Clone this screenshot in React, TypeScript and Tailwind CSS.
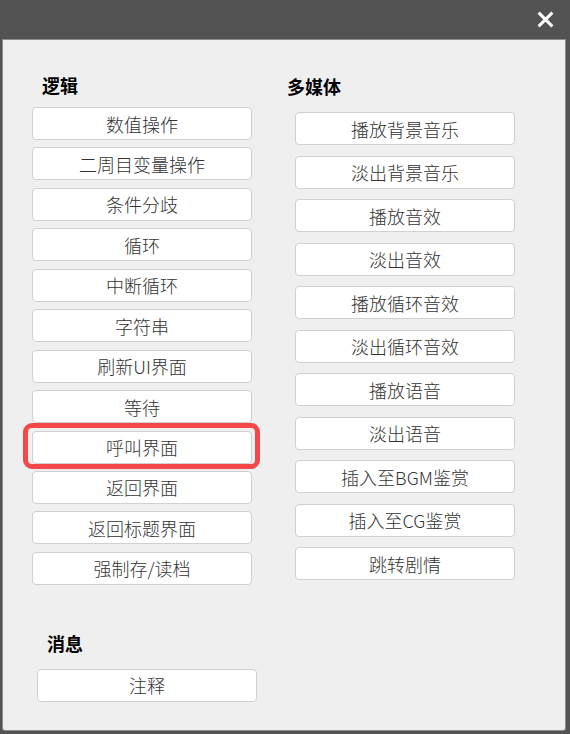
const logic = [
  '数值操作',
  '二周目变量操作',
  '条件分歧',
  '循环',
  '中断循环',
  '字符串',
  '刷新UI界面',
  '等待',
  '呼叫界面',
  '返回界面',
  '返回标题界面',
  '强制存/读档',
]

const media = [
  '播放背景音乐',
  '淡出背景音乐',
  '播放音效',
  '淡出音效',
  '播放循环音效',
  '淡出循环音效',
  '播放语音',
  '淡出语音',
  '插入至BGM鉴赏',
  '插入至CG鉴赏',
  '跳转剧情',
]

const font = 'font-["Noto_Sans_CJK_SC","Noto_Sans",sans-serif]'

function CmdButton({ label, active }: { label: string; active?: boolean }) {
  return (
    <div className="relative">
      {active && (
        <div className="absolute -left-[9px] -right-[8px] -top-[8px] -bottom-[5px] rounded-[9px] border-[5px] border-[#f44848]" />
      )}
      <button className="relative w-[220px] h-[33px] rounded-[4px] bg-white border border-[#d0d0d0] text-[18px] font-light leading-none text-[#333] flex items-center justify-center">
        {label}
      </button>
    </div>
  )
}

export default function App() {
  return (
    <div className={`w-[570px] h-[734px] bg-[#535353] flex flex-col ${font}`}>
      {/* title bar */}
      <div className="h-[39px] flex items-center justify-end pr-[16px] shrink-0">
        <svg className="w-[17px] h-[17px]" viewBox="0 0 16 16" fill="none" stroke="white" strokeWidth={2.8} strokeLinecap="square">
          <path d="M2.5 2.5l11 11M13.5 2.5l-11 11" />
        </svg>
      </div>

      {/* panel */}
      <div className="flex-1 ml-[2px] mr-[4px] mb-[3px] bg-[#efefef] border border-[#8c8c8c] rounded-bl-[3px] rounded-br-[3px] flex flex-col">
        <div className="flex items-start">
          {/* 逻辑 */}
          <div className="ml-[29px] pt-[33px] flex flex-col">
            <h2 className="ml-[10px] h-[24px] leading-[24px] text-[18px] font-bold text-black">逻辑</h2>
            <div className="mt-[10px] flex flex-col gap-[7.45px]">
              {logic.map(l => (
                <CmdButton key={l} label={l} active={l === '呼叫界面'} />
              ))}
            </div>
          </div>

          {/* 多媒体 */}
          <div className="ml-[43px] pt-[34px] flex flex-col">
            <h2 className="-ml-[8px] h-[24px] leading-[24px] text-[18px] font-bold text-black">多媒体</h2>
            <div className="mt-[14px] flex flex-col gap-[10.5px]">
              {media.map(m => (
                <CmdButton key={m} label={m} />
              ))}
            </div>
          </div>
        </div>

        {/* 消息 */}
        <div className="ml-[34px] mt-[46px] flex flex-col">
          <h2 className="ml-[10px] h-[24px] leading-[24px] text-[18px] font-bold text-black">消息</h2>
          <div className="mt-[14px]">
            <CmdButton label="注释" />
          </div>
        </div>
      </div>
    </div>
  )
}
